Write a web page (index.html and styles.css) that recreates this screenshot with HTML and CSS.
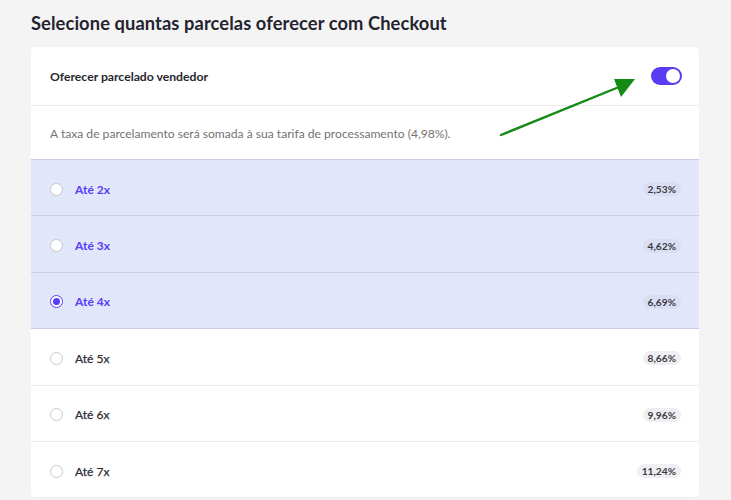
FILE: index.html
```html
<!DOCTYPE html>
<html lang="pt-BR">
<head>
<meta charset="utf-8">
<link rel="stylesheet" href="styles.css">
</head>
<body>
<div class="page">
  <h1 class="title">Selecione quantas parcelas oferecer com Checkout</h1>
  <div class="card">
    <div class="card-head">
      <span class="head-label">Oferecer parcelado vendedor</span>
      <span class="toggle"><span class="knob"></span></span>
    </div>
    <div class="desc">A taxa de parcelamento será somada à sua tarifa de processamento (4,98%).</div>
    <ul class="options">
      <li class="opt active"><span class="radio"></span><span class="opt-label">Até 2x</span><span class="badge">2,53%</span></li>
      <li class="opt active"><span class="radio"></span><span class="opt-label">Até 3x</span><span class="badge">4,62%</span></li>
      <li class="opt active"><span class="radio checked"></span><span class="opt-label">Até 4x</span><span class="badge">6,69%</span></li>
      <li class="opt"><span class="radio"></span><span class="opt-label">Até 5x</span><span class="badge">8,66%</span></li>
      <li class="opt"><span class="radio"></span><span class="opt-label">Até 6x</span><span class="badge">9,96%</span></li>
      <li class="opt"><span class="radio"></span><span class="opt-label">Até 7x</span><span class="badge">11,24%</span></li>
    </ul>
  </div>
  <svg class="arrow" width="160" height="80" viewBox="0 0 160 80">
    <line x1="4" y1="60" x2="122" y2="12" stroke="#158a15" stroke-width="2.4" stroke-linecap="round"/>
    <polygon points="138,4 117,4 124,22" fill="#158a15"/>
  </svg>
</div>
</body>
</html>
```
FILE: styles.css
```css
* { box-sizing: border-box; }
html, body { margin: 0; padding: 0; }
body {
  background: #f4f4f4;
  font-family: Lato, "Open Sans", Arial, sans-serif;
  color: #232330;
}
.page {
  position: relative;
  padding: 12px 32px 0 31px;
  height: 500px;
  overflow: hidden;
}
.title {
  margin: 0 0 12px 0;
  font-size: 18.3px;
  line-height: 23px;
  font-weight: 700;
  color: #24242f;
  letter-spacing: 0.1px;
}
.card {
  background: #fff;
  border-radius: 5px;
  overflow: hidden;
}
.card-head {
  height: 59px;
  display: flex;
  align-items: center;
  justify-content: space-between;
  padding: 0 17px 0 19px;
  border-bottom: 1px solid #ececec;
}
.head-label {
  font-size: 12.2px;
  font-weight: 700;
  color: #26262f;
}
.toggle {
  width: 31px;
  height: 18px;
  border-radius: 9px;
  background: #5a3cf5;
  display: flex;
  align-items: center;
  justify-content: flex-end;
  padding: 2px;
}
.knob {
  width: 14px;
  height: 14px;
  border-radius: 50%;
  background: #fff;
}
.desc {
  height: 54px;
  display: flex;
  align-items: center;
  padding: 2px 19px 0;
  font-size: 12.1px;
  color: #737373;
  border-bottom: 1px solid #c9cee6;
}
.options {
  list-style: none;
  margin: 0;
  padding: 0;
}
.opt {
  height: 56.4px;
  display: flex;
  align-items: center;
  padding: 3px 18px 0 19px;
  border-bottom: 1px solid #ececec;
  background: #fff;
}
.opt.active {
  background: #e2e6fa;
  border-bottom-color: #c9cee6;
}
.radio {
  width: 13px;
  height: 13px;
  border-radius: 50%;
  border: 1px solid #c8c8c8;
  background: #fff;
  margin-right: 12px;
  display: flex;
  align-items: center;
  justify-content: center;
}
.radio.checked {
  border-color: #5a3cf5;
}
.radio.checked::after {
  content: "";
  width: 7px;
  height: 7px;
  border-radius: 50%;
  background: #5a3cf5;
}
.opt-label {
  flex: 1;
  font-size: 12px;
  font-weight: 400;
  color: #2b2b35;
  -webkit-text-stroke: 0.25px #2b2b35;
}
.opt.active .opt-label {
  color: #5a3cf5;
  font-weight: 700;
  -webkit-text-stroke: 0;
}
.badge {
  font-size: 10.2px;
  font-weight: 700;
  color: #3a3a44;
  background: #efeff1;
  border-radius: 8px;
  padding: 1px 5px;
  line-height: 12px;
}
.opt.active .badge { background: #dadef2; }
.arrow {
  position: absolute;
  left: 497px;
  top: 75px;
}
```
